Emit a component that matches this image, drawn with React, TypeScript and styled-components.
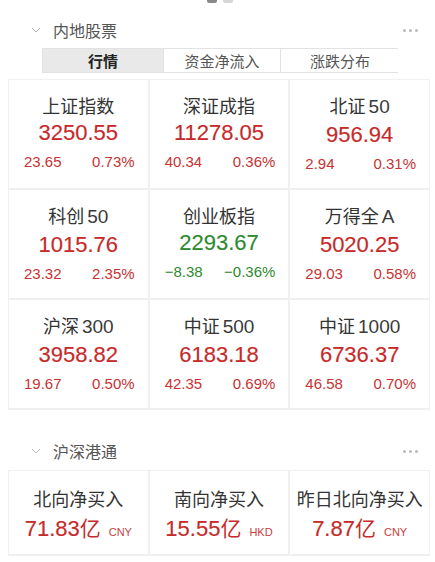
import React from "react";
import styled, { createGlobalStyle } from "styled-components";

const GlobalStyle = createGlobalStyle`
  html, body {
    margin: 0;
    padding: 0;
    background: #fff;
  }
  body {
    font-family: "Noto Sans CJK SC", "Liberation Sans", sans-serif;
    color: #333;
  }
`;

const Page = styled.div`
  width: 435px;
  height: 562px;
  overflow: hidden;
  background: #fff;
`;

const Pager = styled.div`
  display: flex;
  justify-content: center;
  gap: 6px;
  height: 4px;
  margin-left: 4px;
`;

const PagerDot = styled.span<{ $active?: boolean }>`
  width: 10px;
  height: 3px;
  border-radius: 0 0 2px 2px;
  background: ${(p) => (p.$active ? "#8a8a8a" : "#d6d6d6")};
`;

const SectionHeader = styled.div<{ $top: number }>`
  display: flex;
  align-items: center;
  height: 24px;
  margin-top: ${(p) => p.$top}px;
  padding: 0 17px 0 31px;
`;

const Chevron = styled.svg`
  width: 10px;
  height: 8px;
  flex: none;
`;

const SectionTitle = styled.span`
  margin-left: 12px;
  font-size: 16px;
  line-height: 24px;
  color: #555;
  flex: 1;
`;

const More = styled.div`
  display: flex;
  gap: 3px;
`;

const MoreDot = styled.span`
  width: 3px;
  height: 3px;
  border-radius: 50%;
  background: #bbb;
`;

const Tabs = styled.div`
  display: grid;
  grid-template-columns: 120px 117px 119px;
  width: 356px;
  height: 25px;
  margin: 6px 0 0 42px;
  box-sizing: border-box;
  border: 1px solid #e2e2e2;
`;

const Tab = styled.div<{ $active?: boolean }>`
  display: flex;
  align-items: center;
  justify-content: center;
  font-size: 15px;
  line-height: 23px;
  background: ${(p) => (p.$active ? "#e9e9e9" : "#fff")};
  color: ${(p) => (p.$active ? "#222" : "#555")};
  font-weight: ${(p) => (p.$active ? 700 : 400)};
  & + & {
    border-left: 1px solid #e2e2e2;
  }
`;

const Grid = styled.div<{ $top: number; $row: number }>`
  display: grid;
  grid-template-columns: repeat(3, 1fr);
  grid-auto-rows: ${(p) => p.$row}px;
  gap: 2px;
  width: 422px;
  margin: ${(p) => p.$top}px 0 0 8px;
  box-sizing: border-box;
  padding: 1px 1px 2px 1px;
  background: #f0f0f0;
`;

const Cell = styled.div<{ $pad: number }>`
  display: flex;
  flex-direction: column;
  align-items: center;
  background: #fff;
  padding-top: ${(p) => p.$pad}px;
  box-sizing: border-box;
`;

const CellTitle = styled.div`
  font-size: 18px;
  line-height: 22px;
  color: #333;
  white-space: nowrap;
`;

const Latin = styled.span`
  margin-left: 3px;
  font-family: "Liberation Sans", sans-serif;
  font-size: 19px;
  color: #3a3a3a;
`;

const Value = styled.div<{ $down?: boolean }>`
  margin-top: 4px;
  font-family: "Liberation Sans", "Noto Sans CJK SC", sans-serif;
  font-size: 22px;
  line-height: 26px;
  color: ${(p) => (p.$down ? "#2f8a2f" : "#c62a2a")};
  -webkit-text-stroke: 0.15px currentColor;
`;

const SubRow = styled.div<{ $down?: boolean }>`
  display: flex;
  justify-content: space-between;
  align-self: stretch;
  margin-top: 7px;
  padding: 0 13px 0 15px;
  font-family: "Liberation Sans", sans-serif;
  font-size: 15px;
  line-height: 18px;
  color: ${(p) => (p.$down ? "#2f8a2f" : "#c83232")};
`;

const FlowValue = styled.div`
  display: flex;
  align-items: baseline;
  margin-top: 4px;
  color: #c62a2a;
  line-height: 28px;
`;

const FlowNum = styled.span`
  font-family: "Liberation Sans", sans-serif;
  font-size: 22px;
  -webkit-text-stroke: 0.15px currentColor;
`;

const FlowUnit = styled.span`
  font-size: 21px;
`;

const Currency = styled.span`
  margin-left: 8px;
  font-family: "Liberation Sans", sans-serif;
  font-size: 11px;
  color: #c84040;
`;

type Index = {
  name: string;
  code?: string;
  value: string;
  change: string;
  pct: string;
  down?: boolean;
};

const indices: Index[] = [
  { name: "上证指数", value: "3250.55", change: "23.65", pct: "0.73%" },
  { name: "深证成指", value: "11278.05", change: "40.34", pct: "0.36%" },
  { name: "北证", code: "50", value: "956.94", change: "2.94", pct: "0.31%" },
  { name: "科创", code: "50", value: "1015.76", change: "23.32", pct: "2.35%" },
  { name: "创业板指", value: "2293.67", change: "−8.38", pct: "−0.36%", down: true },
  { name: "万得全", code: "A", value: "5020.25", change: "29.03", pct: "0.58%" },
  { name: "沪深", code: "300", value: "3958.82", change: "19.67", pct: "0.50%" },
  { name: "中证", code: "500", value: "6183.18", change: "42.35", pct: "0.69%" },
  { name: "中证", code: "1000", value: "6736.37", change: "46.58", pct: "0.70%" },
];

const flows = [
  { name: "北向净买入", value: "71.83", cur: "CNY" },
  { name: "南向净买入", value: "15.55", cur: "HKD" },
  { name: "昨日北向净买入", value: "7.87", cur: "CNY" },
];

const Header = ({ title, top }: { title: string; top: number }) => (
  <SectionHeader $top={top}>
    <Chevron viewBox="0 0 10 8">
      <polyline points="1,2 5,6 9,2" fill="none" stroke="#b0b0b0" strokeWidth="0.9" />
    </Chevron>
    <SectionTitle>{title}</SectionTitle>
    <More>
      <MoreDot />
      <MoreDot />
      <MoreDot />
    </More>
  </SectionHeader>
);

const App = (): JSX.Element => {
  return (
    <Page>
      <GlobalStyle />
      <Pager>
        <PagerDot $active />
        <PagerDot />
      </Pager>
      <Header title="内地股票" top={14} />
      <Tabs>
        <Tab $active>行情</Tab>
        <Tab>资金净流入</Tab>
        <Tab>涨跌分布</Tab>
      </Tabs>
      <Grid $top={6} $row={108}>
        {indices.map((it) => (
          <Cell key={it.name + (it.code || "")} $pad={14}>
            <CellTitle>
              {it.name}
              {it.code && <Latin>{it.code}</Latin>}
            </CellTitle>
            <Value $down={it.down}>{it.value}</Value>
            <SubRow $down={it.down}>
              <span>{it.change}</span>
              <span>{it.pct}</span>
            </SubRow>
          </Cell>
        ))}
      </Grid>
      <Header title="沪深港通" top={29} />
      <Grid $top={7} $row={83}>
        {flows.map((f) => (
          <Cell key={f.name} $pad={16}>
            <CellTitle>{f.name}</CellTitle>
            <FlowValue>
              <FlowNum>{f.value}</FlowNum>
              <FlowUnit>亿</FlowUnit>
              <Currency>{f.cur}</Currency>
            </FlowValue>
          </Cell>
        ))}
      </Grid>
    </Page>
  );
};

export default App;
